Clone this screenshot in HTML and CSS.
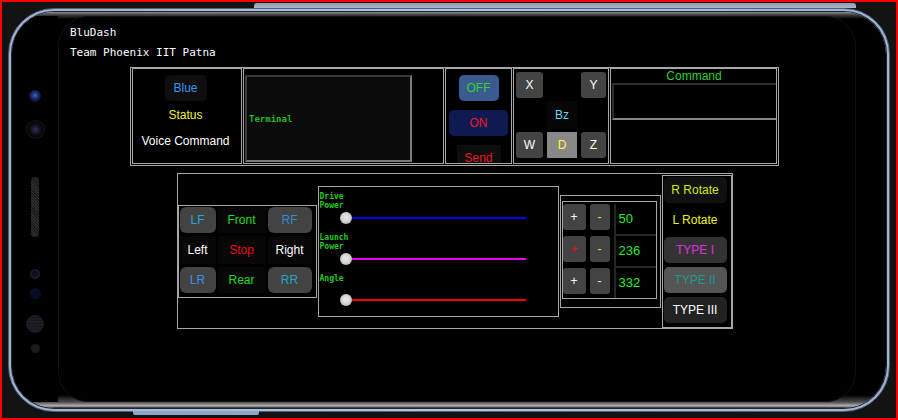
FILE: index.html
```html
<!DOCTYPE html>
<html>
<head>
<meta charset="utf-8">
<title>BluDash</title>
<link rel="stylesheet" href="styles.css">
</head>
<body>
<div class="phone">
  <div class="hw-top"></div>
  <div class="hw-bottom"></div>
  <div class="bezel">
    <div class="sensors">
      <span class="lens"></span>
      <span class="camera"></span>
      <span class="speaker"></span>
      <span class="dot dot1"></span>
      <span class="dot dot2"></span>
      <span class="dot big"></span>
      <span class="dot small"></span>
    </div>
    <div class="screen">
      <div class="title">BluDash</div>
      <div class="title">Team Phoenix IIT Patna</div>

      <div class="panel panel-top">
        <div class="cell c-status">
          <div class="b-blue">Blue</div>
          <div class="status">Status</div>
          <div class="voice">Voice Command</div>
        </div>
        <div class="cell c-term"><div class="term">Terminal</div></div>
        <div class="cell c-power">
          <div class="pbtn off">OFF</div>
          <div class="pbtn on">ON</div>
          <div class="pbtn send">Send</div>
        </div>
        <div class="cell c-pos">
          <div class="kbtn">X</div><div></div><div class="kbtn">Y</div>
          <div></div><div class="kbtn bz">Bz</div><div></div>
          <div class="kbtn">W</div><div class="kbtn d">D</div><div class="kbtn">Z</div>
        </div>
        <div class="cell c-cmd">
          <div class="cmd-title">Command</div>
          <div class="cmd-box"></div>
        </div>
      </div>

      <div class="panel panel-bot">
        <div class="pad">
          <div class="dbtn lf">LF</div><div class="dcell front">Front</div><div class="dbtn rf">RF</div>
          <div class="dcell left">Left</div><div class="dcell stop">Stop</div><div class="dcell right">Right</div>
          <div class="dbtn lr">LR</div><div class="dcell rear">Rear</div><div class="dbtn rr">RR</div>
        </div>
        <div class="sliders">
          <div class="sgroup">
            <div class="slabel">Drive<br>Power</div>
            <div class="slider"><span class="thumb"></span><span class="track blue"></span></div>
          </div>
          <div class="sgroup">
            <div class="slabel">Launch<br>Power</div>
            <div class="slider"><span class="thumb"></span><span class="track magenta"></span></div>
          </div>
          <div class="sgroup">
            <div class="slabel">Angle</div>
            <div class="slider"><span class="thumb"></span><span class="track red"></span></div>
          </div>
        </div>
        <div class="nums">
          <div class="numgrid">
            <div class="pm">+</div><div class="pm yel">-</div><div class="val">50</div>
            <div class="pm redp">+</div><div class="pm yel">-</div><div class="val">236</div>
            <div class="pm">+</div><div class="pm">-</div><div class="val last">332</div>
          </div>
        </div>
        <div class="types">
          <div class="tbtn rrot">R Rotate</div>
          <div class="tbtn lrot">L Rotate</div>
          <div class="tbtn t1">TYPE I</div>
          <div class="tbtn t2">TYPE II</div>
          <div class="tbtn t3">TYPE III</div>
        </div>
      </div>
    </div>
  </div>
</div>
</body>
</html>
```

FILE: styles.css
```css
* { box-sizing: border-box; }
html, body { margin: 0; padding: 0; }
body {
  width: 898px;
  height: 420px;
  border: 2px solid #ff0000;
  background: #131313;
  overflow: hidden;
  font-family: "Liberation Sans", Arial, sans-serif;
  font-size: 12px;
}

/* ---------- device frame ---------- */
.phone {
  position: relative;
  margin: 6px 0 0 6px;
  width: 882px;
  height: 404px;
  border-radius: 46px;
  border: 1px solid #4f5d76;
  padding: 3px;
  background: linear-gradient(90deg, #9fb3d2, #b4c6e0 50%, #9fb3d2);
}
.hw-top {
  position: absolute;
  left: 245px;
  top: -6px;
  width: 602px;
  height: 5px;
  border-radius: 3px 3px 0 0;
  background: linear-gradient(#8e9ab0, #a9b6cb);
}
.hw-bottom {
  position: absolute;
  left: 124px;
  bottom: -4px;
  width: 126px;
  height: 4px;
  border-radius: 0 0 2px 2px;
  background: #8fa5c8;
}
.bezel {
  height: 100%;
  border-radius: 42px;
  box-shadow: 0 0 0 1px #1e2430;
  background: linear-gradient(to bottom, #8d8d8d 0, #3d3d3d 3px, #000 7px, #000 calc(100% - 13px), #4a4a4a calc(100% - 6px), #b5b5b5 calc(100% - 2px), #1a1a1a 100%);
  display: flex;
  padding: 4px 30px 6px 0;
  overflow: hidden;
}
.sensors {
  width: 46px;
  flex: none;
  display: flex;
  flex-direction: column;
  align-items: center;
  background: #000;
}
.sensors span { display: block; flex: none; border-radius: 50%; }
.lens {
  width: 12px; height: 12px; margin-top: 74px;
  background: radial-gradient(circle at 50% 45%, #3d64b8 0, #162a66 40%, #0a1030 70%, #15161c 100%);
}
.camera {
  width: 19px; height: 19px; margin-top: 18px;
  background: radial-gradient(circle at 50% 50%, #3a2a5a 0, #120f1e 35%, #050505 55%, #1b1b1e 75%, #101012 100%);
}
.sensors .speaker {
  width: 8px; height: 60px; margin-top: 38px; border-radius: 4px;
  background: repeating-linear-gradient(45deg, #2e2e2e 0 1px, #1a1a1a 1px 2px);
}
.dot1 { width: 10px; height: 10px; margin-top: 32px; background: #0e0f1c; box-shadow: inset 0 0 0 2px #1a1b2a; }
.dot2 { width: 11px; height: 11px; margin-top: 9px; background: #0b0c26; }
.big {
  width: 18px; height: 18px; margin-top: 16px;
  background: repeating-linear-gradient(#1c1d26 0 2px, #15161d 2px 3px);
}
.small { width: 9px; height: 9px; margin-top: 11px; background: #1b1b1d; }

.screen {
  flex: 1;
  border-radius: 30px;
  border: 1px solid #121212;
  background: #000;
  padding: 6px 16px 0 11px;
}

/* ---------- header ---------- */
.title {
  font-family: "DejaVu Sans Mono", monospace;
  font-size: 11px;
  line-height: 20px;
  color: #fff;
}

/* ---------- panels ---------- */
.panel {
  display: flex;
  width: fit-content;
  margin: 0 auto;
  border: 1px solid #a8a8a8;
  gap: 1px;
}
.panel-top { margin-top: 4px; padding: 0 1px 1px; }
.cell { border: 1px solid #a8a8a8; height: 96px; }

.c-status {
  width: 110px;
  display: flex;
  flex-direction: column;
  align-items: center;
  padding: 6px 3px 0 0;
}
.b-blue {
  width: 42px; height: 26px; line-height: 26px; text-align: center;
  background: #0e0e0e; border-radius: 5px; color: #3a96f0;
}
.status { margin-top: 4px; line-height: 20px; color: #f2f21e; }
.voice { margin-top: 6px; line-height: 20px; color: #fff; }

.c-term { width: 201px; padding: 6px 0 0 1px; }
.term {
  width: 167px; height: 87px;
  border: 2px solid;
  border-color: #3a3a3a #7a7a7a #7a7a7a #3a3a3a;
  background: #0b0b0b;
  display: flex; align-items: center;
  padding-left: 2px;
  font: bold 9px "DejaVu Sans Mono", monospace;
  color: #22bb22;
}

.c-power {
  width: 67px;
  display: flex; flex-direction: column; align-items: center;
  padding-top: 6px;
  overflow: hidden;
}
.pbtn { flex: none; height: 26px; line-height: 26px; text-align: center; border-radius: 5px; }
.off { width: 40px; background: #3b5a90; color: #33d433; }
.on { width: 59px; margin-top: 9px; background: #101a52; color: #ee1a22; }
.send { width: 44px; margin-top: 9px; background: #0d0d0d; color: #ee1a1a; border-radius: 0; }

.c-pos {
  width: 96px;
  display: grid;
  grid-template-columns: 27px 30px 25px;
  grid-template-rows: 26px 28px 26px;
  column-gap: 4px;
  row-gap: 3px;
  align-content: start;
  padding: 3px 0 0 2px;
}
.kbtn {
  background: #444; border-radius: 3px; color: #fff;
  display: flex; align-items: center; justify-content: center;
}
.kbtn.bz { background: #060606; color: #6ad8f0; border-radius: 0; }
.kbtn.d { background: #888; color: #ffff33; border-radius: 0; }

.c-cmd { width: 167px; padding-left: 1px; }
.cmd-title { text-align: center; color: #2ad42a; line-height: 14px; }
.cmd-box {
  height: 37px;
  border-top: 2px solid #2e2e2e;
  border-left: 2px solid #2e2e2e;
  border-bottom: 2px solid #858585;
  background: #000;
}

/* ---------- bottom panel ---------- */
.panel-bot { margin-top: 7px; height: 156px; align-items: center; }

.pad {
  width: 139px; height: 93px;
  border: 1px solid #a8a8a8;
  display: grid;
  grid-template-columns: 36px 48px 44px;
  grid-template-rows: 26px 28px 26px;
  column-gap: 2px;
  row-gap: 3px;
  padding: 1px 0 0 1px;
}
.dbtn, .dcell { display: flex; align-items: center; justify-content: center; }
.dbtn { background: #434343; border-radius: 6px; }
.dcell { background: #070707; }
.lf { color: #2aa6d6; }
.rf { color: #3b8ad2; }
.lr { color: #3c8fe6; }
.rr { color: #27a2cc; }
.front, .rear { color: #22dd22; }
.left, .right { color: #fff; }
.stop { color: #ee1111; }

.sliders {
  width: 241px; height: 131px;
  border: 1px solid #a8a8a8;
  padding: 5px 0 0 1px;
  display: flex; flex-direction: column; gap: 8px;
}
.sgroup { height: 33px; }
.slabel {
  height: 18px;
  font: bold 8px/9px "DejaVu Sans Mono", monospace;
  color: #22cc22;
}
.slider {
  margin: 1px 0 0 20px;
  width: 186px; height: 14px;
  display: flex; align-items: center;
}
.thumb {
  flex: none;
  width: 12px; height: 12px; border-radius: 50%;
  background: radial-gradient(circle at 50% 45%, #ececec 0, #d2d2d2 50%, #9c9c9c 100%);
}
.track { flex: 1; height: 2px; }
.track.blue { background: #0000ee; }
.track.magenta { background: #ee00ee; }
.track.red { background: #ee0000; }

.nums {
  width: 101px; height: 113px;
  border: 1px solid #a8a8a8;
  padding: 5px 3px 8px 1px;
}
.numgrid {
  width: 95px; height: 98px;
  border: 1px solid #a8a8a8;
  display: grid;
  grid-template-columns: 23px 20px 42px;
  grid-template-rows: 32px 32px 30px;
  column-gap: 4px;
  padding-top: 2px;
}
.pm {
  height: 26px;
  background: #434343; border-radius: 3px;
  color: #fff;
  display: flex; align-items: center; justify-content: center;
}
.pm.yel { color: #e8e820; }
.pm.redp { color: #ee1111; }
.val {
  border-left: 2px solid #262626;
  border-bottom: 2px solid #262626;
  display: flex; align-items: center;
  padding-left: 3px;
  color: #22ee22;
  font-size: 13px;
}
.val.last { border-bottom: 0; }

.types {
  width: 70px; height: 153px;
  border: 1px solid #a8a8a8;
  padding: 1px 0 0 1px;
  display: flex; flex-direction: column; gap: 4px;
}
.tbtn {
  flex: none;
  width: 63px; height: 26px; border-radius: 5px;
  display: flex; align-items: center; justify-content: center;
}
.rrot { background: #111; color: #d4e614; }
.lrot { color: #f0f020; }
.t1 { background: #333; color: #e22ee2; }
.t2 { background: #555; color: #1a9c8c; }
.t3 { background: #222; color: #fff; }
```
